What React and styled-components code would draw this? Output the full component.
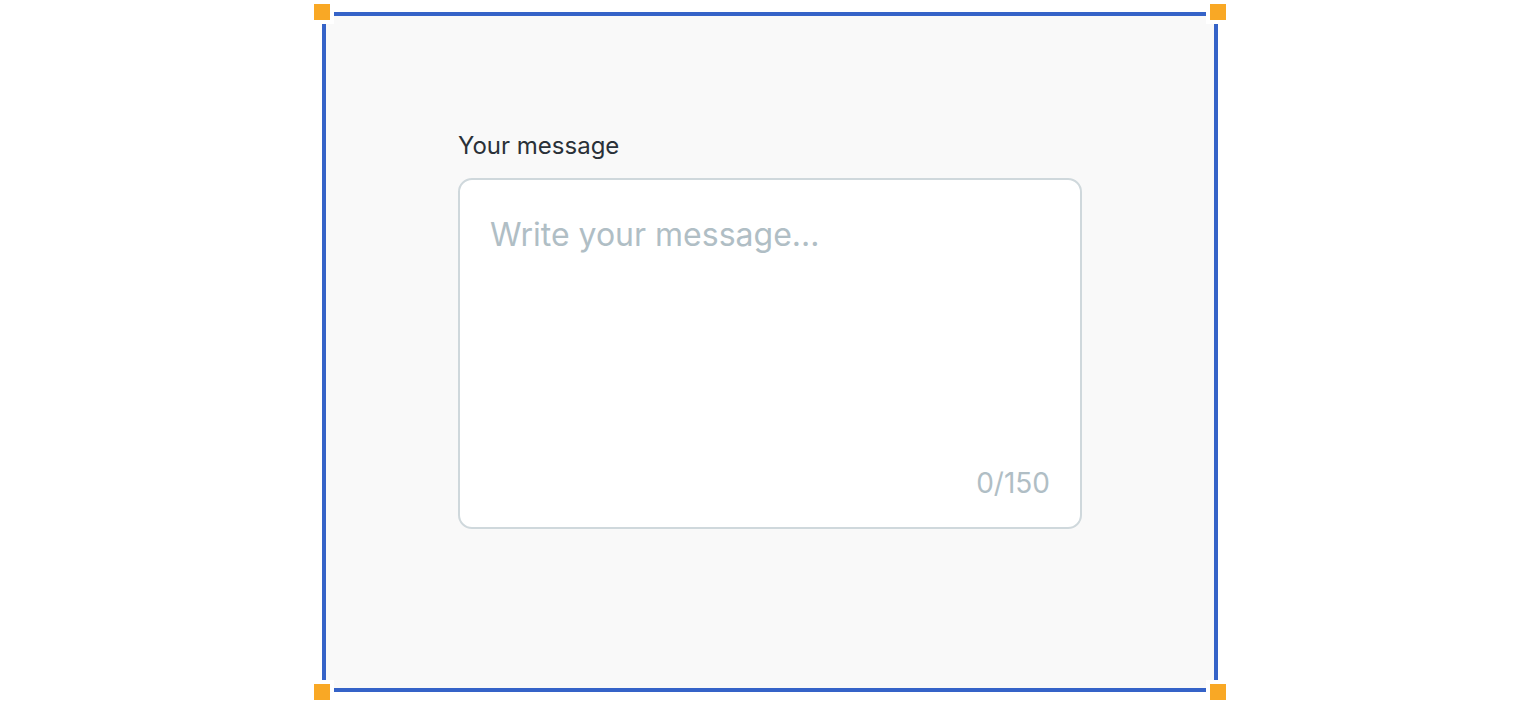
import { useState } from "react"
import styled, { createGlobalStyle } from "styled-components"

const Global = createGlobalStyle`
    body{
        margin: 0;
        background: #fff;
        font-family: Inter, "Noto Sans", sans-serif;
    }
`

export default function App() {
    const [texto, setTexto] = useState("")
    const max = 150

    return (
        <>
            <Global />
            <Moldura>
                <Alca className="sup-esq" />
                <Alca className="sup-dir" />
                <Alca className="inf-esq" />
                <Alca className="inf-dir" />
                <Campo>
                    <Rotulo htmlFor="mensagem">Your message</Rotulo>
                    <Caixa>
                        <Texto
                            id="mensagem"
                            placeholder="Write your message..."
                            maxLength={max}
                            value={texto}
                            onChange={(e) => setTexto(e.target.value)}
                        />
                        <Contador>{texto.length}/{max}</Contador>
                    </Caixa>
                </Campo>
            </Moldura>
        </>
    )
}

const Moldura = styled.div`
    position: relative;
    box-sizing: border-box;
    width: 896px;
    height: 680px;
    margin: 12px auto;
    border: 4px solid #3563c8;
    background: #f9f9f9;
    display: flex;
    justify-content: center;
    padding-top: 114px;
`

const Alca = styled.span`
    position: absolute;
    width: 16px;
    height: 16px;
    background: #f9a825;
    border: 4px solid #fff;

    &.sup-esq{ top: -16px; left: -16px; }
    &.sup-dir{ top: -16px; right: -16px; }
    &.inf-esq{ bottom: -16px; left: -16px; }
    &.inf-dir{ bottom: -16px; right: -16px; }
`

const Campo = styled.div`
    width: 624px;
    display: flex;
    flex-direction: column;
    gap: 16px;
`

const Rotulo = styled.label`
    font-size: 24px;
    line-height: 32px;
    color: #2a3138;
`

const Caixa = styled.div`
    position: relative;
    box-sizing: border-box;
    height: 351px;
    border: 2px solid #cfd8dc;
    border-radius: 14px;
    background: #fff;
    display: flex;
    flex-direction: column;
    padding: 35px 30px 28px;
`

const Texto = styled.textarea`
    flex: 1;
    border: none;
    outline: none;
    resize: none;
    padding: 0;
    background: transparent;
    font-family: Inter, "Noto Sans", sans-serif;
    font-size: 32px;
    line-height: 40px;
    color: #2a3138;

    &::placeholder{
        color: #b0bec5;
    }
`

const Contador = styled.span`
    align-self: flex-end;
    font-size: 28px;
    line-height: 32px;
    color: #b0bec5;
`
